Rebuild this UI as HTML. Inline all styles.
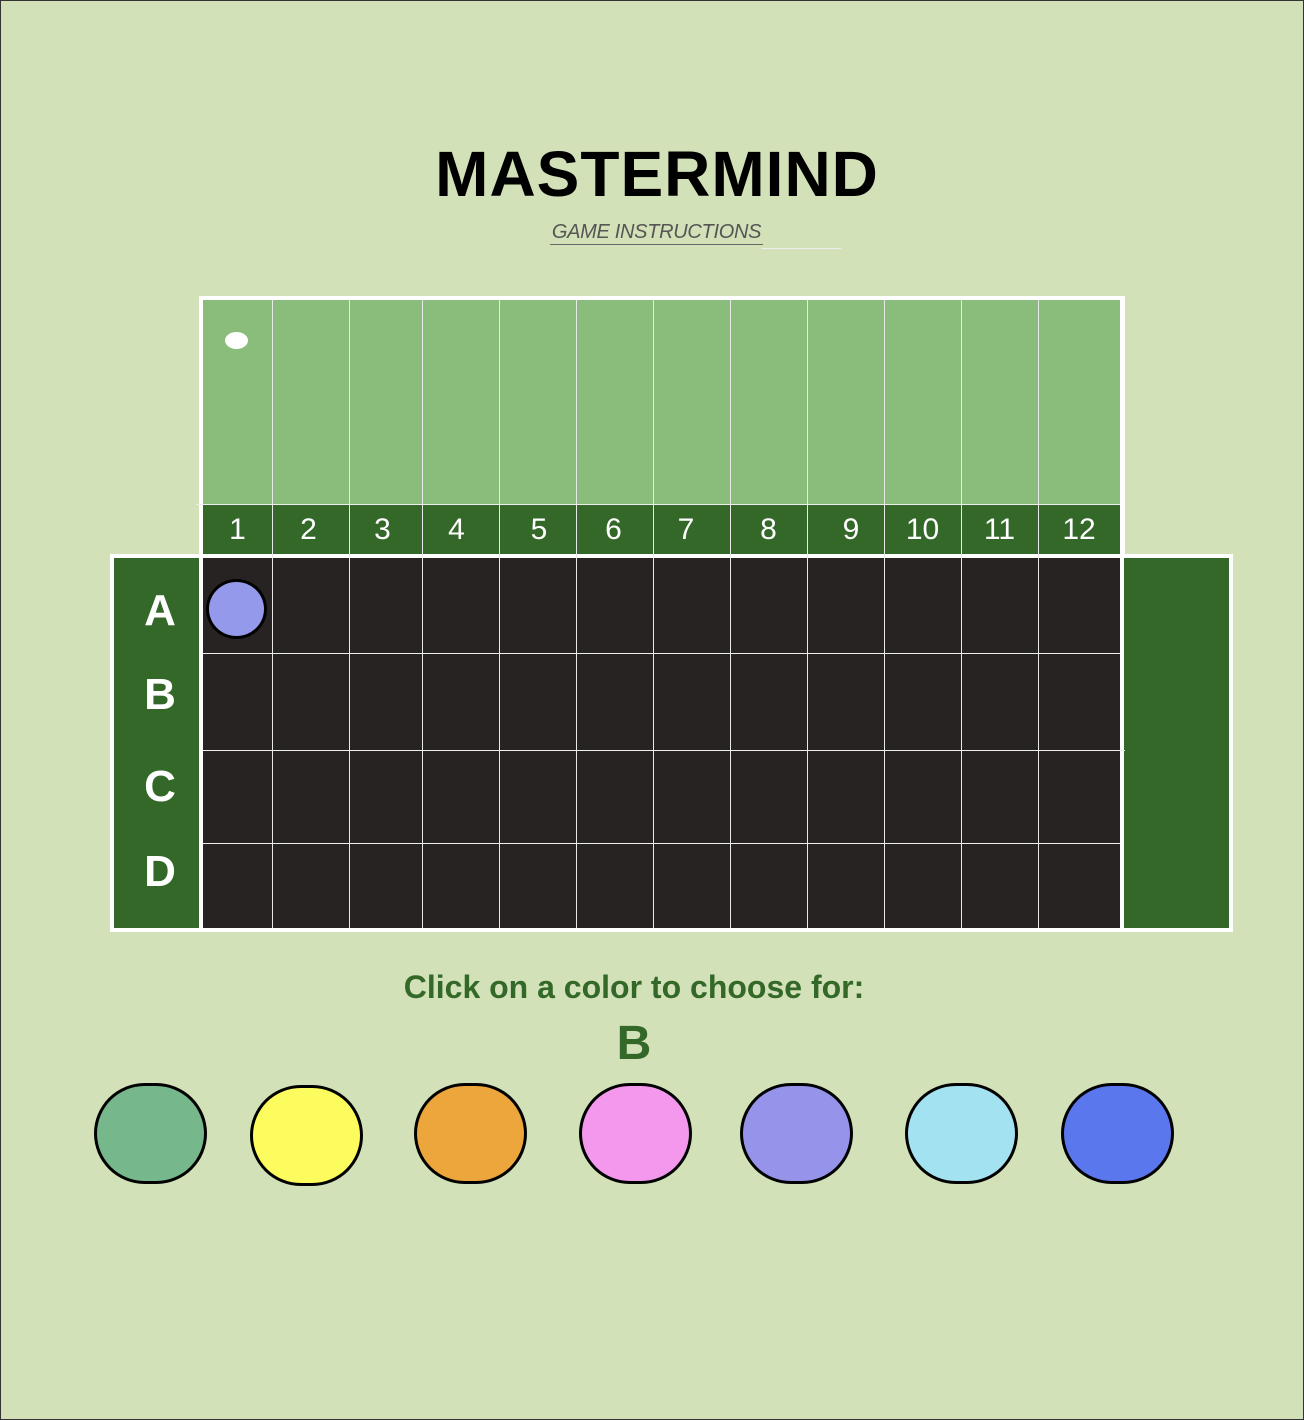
<!DOCTYPE html>
<html><head><meta charset="utf-8"><style>
*{margin:0;padding:0;box-sizing:border-box}
body{width:1304px;height:1420px;background:#d2e1b8;position:relative;overflow:hidden;font-family:"Liberation Sans",sans-serif;border:1px solid #333}
.a{position:absolute}
h1{position:absolute;left:0;width:1312px;top:136px;text-align:center;font-size:64px;font-weight:bold;color:#000;letter-spacing:1px}
.ins{position:absolute;left:549px;top:219px;width:213px;font-size:20px;font-style:italic;color:#555;border-bottom:1.5px solid #666;line-height:24px;text-align:center;white-space:nowrap;letter-spacing:-0.3px}
.vl{position:absolute;width:1px;background:#e8e8e8}
.hl{position:absolute;height:1px;background:#eee}
.num{position:absolute;top:503px;height:50px;line-height:52px;text-align:center;color:#fff;font-size:30px}
.lbl{position:absolute;left:113px;width:92px;text-align:center;color:#fff;font-size:44px;font-weight:bold}
.ov{position:absolute;top:1082px;width:113px;height:101px;border:3px solid #000;border-radius:45% 45% 45% 45%/50% 50% 50% 50%}
</style></head><body>
<h1>MASTERMIND</h1>
<div class="ins">GAME INSTRUCTIONS</div>
<div class="a" style="left:760px;top:247px;width:80px;height:1px;background:#eee"></div>
<div class="a" style="left:198px;top:295px;width:926px;height:262px;background:#fff"></div>
<div class="a" style="left:202px;top:299px;width:917px;height:204px;background:#8abd7c"></div>
<div class="a" style="left:202px;top:504px;width:917px;height:49px;background:#336829"></div>
<div class="a" style="left:109px;top:553px;width:1123px;height:378px;background:#fff"></div>
<div class="a" style="left:113px;top:557px;width:85px;height:370px;background:#336829"></div>
<div class="a" style="left:202px;top:557px;width:917px;height:370px;background:#262322"></div>
<div class="a" style="left:1123px;top:557px;width:105px;height:370px;background:#336829"></div>
<div class="vl" style="left:271px;top:299px;height:628px"></div>
<div class="vl" style="left:348px;top:299px;height:628px"></div>
<div class="vl" style="left:421px;top:299px;height:628px"></div>
<div class="vl" style="left:498px;top:299px;height:628px"></div>
<div class="vl" style="left:575px;top:299px;height:628px"></div>
<div class="vl" style="left:652px;top:299px;height:628px"></div>
<div class="vl" style="left:729px;top:299px;height:628px"></div>
<div class="vl" style="left:806px;top:299px;height:628px"></div>
<div class="vl" style="left:883px;top:299px;height:628px"></div>
<div class="vl" style="left:960px;top:299px;height:628px"></div>
<div class="vl" style="left:1037px;top:299px;height:628px"></div>
<div class="hl" style="left:195px;top:503px;width:924px"></div>
<div class="hl" style="left:202px;top:652px;width:917px"></div>
<div class="hl" style="left:202px;top:749px;width:922px"></div>
<div class="hl" style="left:202px;top:842px;width:917px"></div>
<div class="num" style="left:202px;width:69px">1</div>
<div class="num" style="left:271px;width:73px">2</div>
<div class="num" style="left:348px;width:67px">3</div>
<div class="num" style="left:421px;width:69px">4</div>
<div class="num" style="left:498px;width:80px">5</div>
<div class="num" style="left:575px;width:75px">6</div>
<div class="num" style="left:652px;width:66px">7</div>
<div class="num" style="left:729px;width:77px">8</div>
<div class="num" style="left:806px;width:88px">9</div>
<div class="num" style="left:883px;width:77px">10</div>
<div class="num" style="left:960px;width:77px">11</div>
<div class="num" style="left:1037px;width:82px">12</div>
<div class="a" style="left:224px;top:331px;width:23px;height:17px;border-radius:50%;background:#fff"></div>
<div class="lbl" style="top:585px">A</div>
<div class="lbl" style="top:669px">B</div>
<div class="lbl" style="top:761px">C</div>
<div class="lbl" style="top:846px">D</div>
<div class="a" style="left:205px;top:578px;width:61px;height:60px;border-radius:50%;background:#9599ec;border:3px solid #000"></div>
<div class="a" style="left:0;width:1266px;top:968px;text-align:center;font-size:32px;font-weight:bold;color:#336829">Click on a color to choose for:</div>
<div class="a" style="left:0;width:1266px;top:1015px;text-align:center;font-size:48px;font-weight:bold;color:#336829">B</div>
<div class="ov" style="left:93px;background:#76b78c"></div>
<div class="ov" style="left:249px;background:#fdfc5e;top:1084px"></div>
<div class="ov" style="left:413px;background:#eca63c"></div>
<div class="ov" style="left:578px;background:#f398ec"></div>
<div class="ov" style="left:739px;background:#9594ea"></div>
<div class="ov" style="left:904px;background:#a3e2f1"></div>
<div class="ov" style="left:1060px;background:#5a77ee"></div>
</body></html>
